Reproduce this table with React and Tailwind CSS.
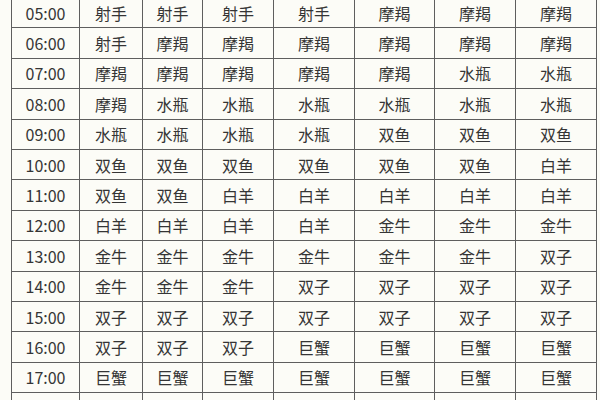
import React from 'react'

const rows = [
  ['05:00', '射手', '射手', '射手', '射手', '摩羯', '摩羯', '摩羯'],
  ['06:00', '射手', '摩羯', '摩羯', '摩羯', '摩羯', '摩羯', '摩羯'],
  ['07:00', '摩羯', '摩羯', '摩羯', '摩羯', '摩羯', '水瓶', '水瓶'],
  ['08:00', '摩羯', '水瓶', '水瓶', '水瓶', '水瓶', '水瓶', '水瓶'],
  ['09:00', '水瓶', '水瓶', '水瓶', '水瓶', '双鱼', '双鱼', '双鱼'],
  ['10:00', '双鱼', '双鱼', '双鱼', '双鱼', '双鱼', '双鱼', '白羊'],
  ['11:00', '双鱼', '双鱼', '白羊', '白羊', '白羊', '白羊', '白羊'],
  ['12:00', '白羊', '白羊', '白羊', '白羊', '金牛', '金牛', '金牛'],
  ['13:00', '金牛', '金牛', '金牛', '金牛', '金牛', '金牛', '双子'],
  ['14:00', '金牛', '金牛', '金牛', '双子', '双子', '双子', '双子'],
  ['15:00', '双子', '双子', '双子', '双子', '双子', '双子', '双子'],
  ['16:00', '双子', '双子', '双子', '巨蟹', '巨蟹', '巨蟹', '巨蟹'],
  ['17:00', '巨蟹', '巨蟹', '巨蟹', '巨蟹', '巨蟹', '巨蟹', '巨蟹'],
  ['', '', '', '', '', '', '', ''],
]

const widths = [68, 63, 60, 71, 81, 80, 81, 81]

export default function App() {
  return (
    <div
      className="w-[600px] h-[400px] overflow-hidden bg-[#fcfcf7] pl-[11px] text-[#353535]"
      style={{ fontFamily: '"Noto Sans CJK SC", "Noto Sans", sans-serif' }}
    >
      <table className="table-fixed border-collapse -mt-[3px] text-[16px]">
        <colgroup>
          {widths.map((w, i) => (
            <col key={i} style={{ width: w }} />
          ))}
        </colgroup>
        <tbody>
          {rows.map((row, r) => (
            <tr key={r} className="h-[30.4px]">
              {row.map((cell, c) => (
                <td
                  key={c}
                  className="border border-[#5e5e5e] text-center align-middle p-0 leading-none"
                >
                  {cell}
                </td>
              ))}
            </tr>
          ))}
        </tbody>
      </table>
    </div>
  )
}
